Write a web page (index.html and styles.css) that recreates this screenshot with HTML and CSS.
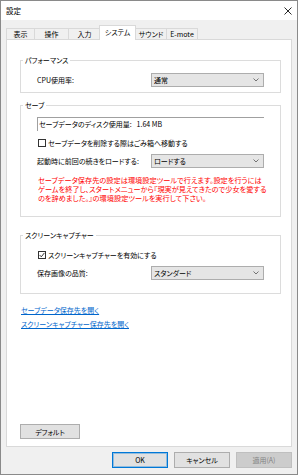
FILE: index.html
```html
<!DOCTYPE html>
<html lang="ja">
<head>
    <meta charset="UTF-8">
    <title>設定</title>
    <link rel="stylesheet" href="styles.css">
</head>
<body>

<div class="window">
    <div class="titlebar">
        <span class="title">設定</span>
        <svg class="close" width="8" height="8" viewBox="0 0 8 8">
            <path d="M0.5 0.5 L7.5 7.5 M7.5 0.5 L0.5 7.5" stroke="#111" stroke-width="0.9" fill="none"/>
        </svg>
    </div>

    <div class="client">
        <div class="tabs">
            <span class="tab">表示</span>
            <span class="tab">操作</span>
            <span class="tab">入力</span>
            <span class="tab active">システム</span>
            <span class="tab">サウンド</span>
            <span class="tab">E-mote</span>
        </div>

        <div class="panel">
            <fieldset class="group group-perf">
                <legend>パフォーマンス</legend>
                <div class="row">
                    <span class="label">CPU使用率:</span>
                    <div class="combo">通常
                        <svg class="chevron" width="6" height="4" viewBox="0 0 6 4"><polyline points="0.5,0.5 3,3 5.5,0.5" stroke="#555" stroke-width="0.8" fill="none"/></svg>
                    </div>
                </div>
            </fieldset>

            <fieldset class="group group-save">
                <legend>セーブ</legend>
                <div class="disk">セーブデータのディスク使用量:<span class="disk-size">1.64 MB</span></div>
                <div class="check-row">
                    <span class="box"></span>
                    <span>セーブデータを削除する際はごみ箱へ移動する</span>
                </div>
                <div class="row">
                    <span class="label">起動時に前回の続きをロードする:</span>
                    <div class="combo">ロードする
                        <svg class="chevron" width="6" height="4" viewBox="0 0 6 4"><polyline points="0.5,0.5 3,3 5.5,0.5" stroke="#555" stroke-width="0.8" fill="none"/></svg>
                    </div>
                </div>
                <p class="note">セーブデータ保存先の設定は環境設定ツールで行えます。設定を行うには<br>ゲームを終了し、スタートメニューから『現実が見えてきたので少女を愛する<br>のを辞めました。』の環境設定ツールを実行して下さい。</p>
            </fieldset>

            <fieldset class="group group-capture">
                <legend>スクリーンキャプチャー</legend>
                <div class="check-row">
                    <span class="box">
                        <svg width="6" height="6" viewBox="0 0 6 6"><polyline points="0.6,3 2.3,4.8 5.4,0.9" stroke="#222" stroke-width="0.9" fill="none"/></svg>
                    </span>
                    <span>スクリーンキャプチャーを有効にする</span>
                </div>
                <div class="row">
                    <span class="label">保存画像の品質:</span>
                    <div class="combo">スタンダード
                        <svg class="chevron" width="6" height="4" viewBox="0 0 6 4"><polyline points="0.5,0.5 3,3 5.5,0.5" stroke="#555" stroke-width="0.8" fill="none"/></svg>
                    </div>
                </div>
            </fieldset>

            <div class="links">
                <a href="#">セーブデータ保存先を開く</a>
                <a href="#">スクリーンキャプチャー保存先を開く</a>
            </div>

            <button class="btn btn-default">デフォルト</button>
        </div>

        <div class="footer">
            <button class="btn btn-ok">OK</button>
            <button class="btn">キャンセル</button>
            <button class="btn btn-disabled">適用(A)</button>
        </div>
    </div>
</div>

</body>
</html>
```

FILE: styles.css
```css
body {
    margin: 0;
    background-color: #fff;
    font-family: "Noto Sans CJK JP", "Noto Sans", sans-serif;
    font-size: 7px;
    font-feature-settings: "palt";
    color: #000;
}
.window {
    width: 298px;
    height: 475px;
    box-sizing: border-box;
    border: 1px solid #8a8a8a;
    display: flex;
    flex-direction: column;
}
.titlebar {
    height: 19px;
    background-color: #fff;
    display: flex;
    align-items: center;
    justify-content: space-between;
    padding: 0 5px 0 5px;
}
.title {
    font-size: 7.5px;
}
.client {
    flex: 1;
    background-color: #f0f0f0;
    padding: 5px 5px 0;
    display: flex;
    flex-direction: column;
}
.tabs {
    display: flex;
    align-items: flex-end;
    height: 14px;
}
.tab {
    height: 11px;
    line-height: 10px;
    box-sizing: border-box;
    text-align: center;
    border: 1px solid #d9d9d9;
    border-bottom: none;
    margin-right: -1px;
}
.tab:nth-child(1) { width: 29px; }
.tab:nth-child(2) { width: 35px; }
.tab:nth-child(3) { width: 33px; }
.tab:nth-child(5) { width: 32px; }
.tab:nth-child(6) { width: 32px; }
.tab.active {
    width: 37px;
    height: 15px;
    line-height: 12px;
    margin: 0 -1px -1px -1px;
    background-color: #fff;
    position: relative;
    z-index: 1;
}
.panel {
    height: 408px;
    box-sizing: border-box;
    background-color: #fff;
    border: 1px solid #d9d9d9;
    display: flex;
    flex-direction: column;
}
.group {
    margin: 14px 10px 0 13px;
    padding: 7px 16px 5px;
    border: 1px solid #dcdcdc;
    min-width: 0;
}
.group legend {
    line-height: 12px;
    padding: 0 2px;
    margin-left: -14px;
}
.group-save {
    margin-top: 6px;
    padding-top: 6px;
    padding-bottom: 13px;
}
.group-capture {
    margin-top: 12px;
    padding-top: 7px;
    padding-bottom: 13px;
}
.row {
    display: flex;
    align-items: center;
    height: 14px;
}
.row + .row,
.check-row + .row {
    margin-top: 5px;
}
.combo {
    margin-left: auto;
    width: 113px;
    height: 14px;
    box-sizing: border-box;
    border: 1px solid #adadad;
    background-color: #e5e5e5;
    padding-left: 2px;
    display: flex;
    align-items: center;
    justify-content: space-between;
    padding-right: 4px;
}
.chevron {
    display: block;
}
.disk {
    height: 14px;
    line-height: 13px;
    box-sizing: border-box;
    border-top: 1px solid #a0a0a0;
    border-left: 1px solid #a0a0a0;
    padding-left: 1px;
    margin-bottom: 5px;
}
.disk-size {
    margin-left: 5px;
}
.check-row {
    display: flex;
    align-items: center;
    height: 13px;
    gap: 2px;
}
.box {
    width: 8px;
    height: 8px;
    box-sizing: border-box;
    border: 1px solid #333;
    background-color: #fff;
    margin-left: 1px;
    display: flex;
    align-items: center;
    justify-content: center;
}
.box svg {
    display: block;
}
.note {
    margin: 8px 0 0 1px;
    font-size: 7.2px;
    line-height: 9px;
    color: #ff0000;
    white-space: nowrap;
}
.links {
    margin: 9px 0 0 14px;
    display: flex;
    flex-direction: column;
    align-items: flex-start;
    line-height: 14px;
}
.links a {
    color: #0066cc;
    text-decoration: underline;
}
.btn {
    width: 56px;
    height: 16px;
    padding: 0;
    box-sizing: border-box;
    border: 1px solid #adadad;
    background-color: #e1e1e1;
    font-family: inherit;
    font-size: 7px;
    font-feature-settings: "palt";
    color: #000;
}
.btn-default {
    width: 60px;
    height: 15px;
    margin: auto 0 7px 13px;
}
.footer {
    display: flex;
    justify-content: flex-end;
    gap: 6px;
    padding-top: 5px;
}
.btn-ok {
    border-color: #0078d7;
    box-shadow: inset 0 0 0 1px rgba(0, 120, 215, 0.35);
}
.btn-disabled {
    background-color: #cccccc;
    border-color: #bfbfbf;
    color: #838383;
}
```
